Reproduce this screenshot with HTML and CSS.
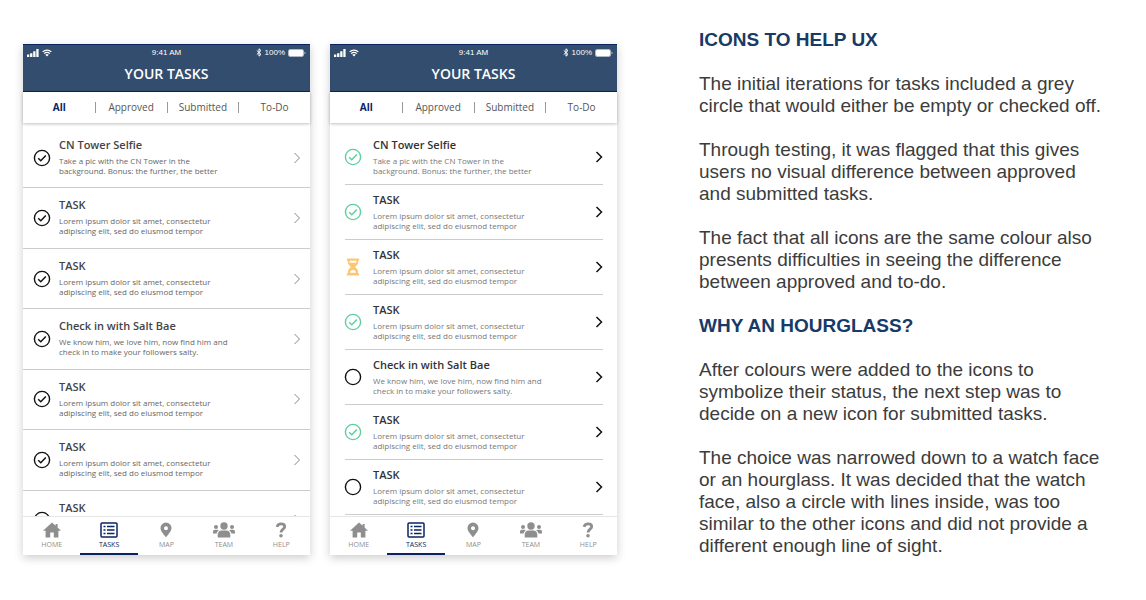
FILE: index.html
```
<!DOCTYPE html>
<html lang="en">
<head>
<meta charset="utf-8">
<meta name="viewport" content="width=device-width, initial-scale=1">
<title>Icons to help UX</title>
<link rel="stylesheet" href="styles.css">
</head>
<body>
<svg class="sprite" aria-hidden="true">
  <symbol id="signal" viewBox="0 0 12 8"><path d="M0 5.6h2.300V8H0zM3.100 4.200h2.300V8h-2.300zM6.200 2.300h2.300V8h-2.300zM9.300 0h2.300v8H9.300z"/></symbol>
  <symbol id="wifi" viewBox="0 0 12 9"><path d="M.8 3.2a7.4 7.4 0 0 1 10.4 0M2.6 5.2a4.8 4.8 0 0 1 6.8 0" fill="none" stroke="currentColor" stroke-width="1.5"/><path d="M6 8.8 3.9 6.7a3 3 0 0 1 4.2 0z"/></symbol>
  <symbol id="bluetooth" viewBox="0 0 6 9"><path d="M.8 2.5 5 6.4 3 8.2V.8l2 1.8L.8 6.5" fill="none" stroke="currentColor"/></symbol>
  <symbol id="battery" viewBox="0 0 18 8"><rect x=".5" y=".5" width="15" height="7" rx="1.5" fill="none" stroke="currentColor" opacity=".6"/><rect x="1" y="1" width="14" height="6" rx="1"/><path d="M16.5 2.7c1.4.5 1.4 2.1 0 2.6z" opacity=".7"/></symbol>
  <symbol id="done" viewBox="0 0 18 18"><circle cx="9" cy="9" r="7.6" fill="none" stroke="currentColor" stroke-width="1.4"/><path d="m5.2 9.200 2.600 2.500 5-5.200" fill="none" stroke="currentColor" stroke-width="1.5"/></symbol>
  <symbol id="todo" viewBox="0 0 18 18"><circle cx="9" cy="9" r="7.6" fill="none" stroke="currentColor" stroke-width="1.4"/></symbol>
  <symbol id="hourglass" viewBox="0 0 18 18"><path fill-rule="evenodd" d="M3.2.5h11.6q.3 0 .3.3v1.6q0 .3-.3.3H14v2.1c0 1.7-1.5 3-3 4.2 1.500 1.200 3 2.500 3 4.200v2.100h.8q.3 0 .3.300v1.600q0 .300-.3.300H3.200q-.3 0-.3-.300v-1.600q0-.300.300-.300H4v-2.100c0-1.700 1.500-3 3-4.200C5.500 7.800 4 6.500 4 4.800V2.700h-.8q-.3 0-.3-.3V.8q0-.3.3-.3zM5.700 2.800h6.600v2H5.700zM5.900 14.800C6.200 13 7.600 12 9 12s2.800 1 3.100 2.800z"/></symbol>
  <symbol id="chevron" viewBox="0 0 8 12"><path d="m1.500 1 5 5-5 5" fill="none" stroke="currentColor"/></symbol>
  <symbol id="chevron-bold" viewBox="0 0 8 12"><path d="m1.500 1 5 5-5 5" fill="none" stroke="currentColor" stroke-width="1.500"/></symbol>
  <symbol id="home" viewBox="0 0 18 16"><path d="M9 .5 12.600 3.800V2h2v3.600L18 8.800H15.400V15.500H10.800V10.500H7.200v5H2.600V8.800H0z"/></symbol>
  <symbol id="list" viewBox="0 0 18 16"><rect x="1" y="1" width="16" height="14" rx="1" fill="none" stroke="currentColor" stroke-width="1.500"/><path d="M3.500 4.500h2M3.500 8h2M3.500 11.500h2M7 4.500h7.500M7 8h7.500M7 11.500h7.500" fill="none" stroke="currentColor" stroke-width="1.400"/></symbol>
  <symbol id="pin" viewBox="0 0 12 16"><path fill-rule="evenodd" d="M6 .5a5.500 5.500 0 0 1 5.500 5.600C11.500 9.500 8 12.500 6 15.500 4 12.500.500 9.500.500 6.100A5.500 5.500 0 0 1 6 .5zm0 3.700a2 2 0 1 0 0 4 2 2 0 0 0 0-4z"/></symbol>
  <symbol id="team" viewBox="0 0 22 16"><circle cx="11" cy="4" r="3.700"/><circle cx="3" cy="5" r="2"/><circle cx="19" cy="5" r="2"/><path d="M4.700 15.500v-2.700C4.700 10 6.200 8.400 8.500 8.400h5c2.300 0 3.800 1.600 3.800 4.400v2.700zM0 11.500V10c0-1.300.8-2.200 2-2.200h2.300q.9 0 1.400.700-1.800 1-2.100 3zM22 11.500V10c0-1.300-.8-2.200-2-2.200h-2.300q-.9 0-1.400.700 1.800 1 2.100 3z"/></symbol>
  <symbol id="help" viewBox="0 0 12 16"><path d="M2 4.800C2.600 2.900 4 1.900 6 1.900c2.200 0 3.700 1 3.700 2.800C9.700 7.300 6 7.200 6 10.600" fill="none" stroke="currentColor" stroke-width="2.800"/><circle cx="6" cy="13.800" r="1.800"/></symbol>
</svg>

<main class="page">
  <section class="phone phone-before" aria-label="Original task list">
    <header class="app-header">
      <div class="status-bar">
        <span class="status-left"><svg class="i-signal"><use href="#signal"/></svg><svg class="i-wifi"><use href="#wifi"/></svg></span>
        <span>9:41 AM</span>
        <span class="status-right"><svg class="i-bluetooth"><use href="#bluetooth"/></svg>100%<svg class="i-battery"><use href="#battery"/></svg></span>
      </div>
      <h2 class="app-title">YOUR TASKS</h2>
    </header>
    <div class="tabs">
      <button class="tab tab-active" type="button">All</button>
      <button class="tab" type="button">Approved</button>
      <button class="tab" type="button">Submitted</button>
      <button class="tab" type="button">To-Do</button>
    </div>
    <div class="viewport">
      <ul class="tasks">
        <li><a class="task" href="#"><svg class="state"><use href="#done"/></svg><span class="copy"><strong>CN Tower Selfie</strong><span>Take a pic with the CN Tower in the<br>background. Bonus: the further, the better</span></span><svg class="chevron"><use href="#chevron"/></svg></a></li>
        <li><a class="task" href="#"><svg class="state"><use href="#done"/></svg><span class="copy"><strong>TASK</strong><span>Lorem ipsum dolor sit amet, consectetur<br>adipiscing elit, sed do eiusmod tempor</span></span><svg class="chevron"><use href="#chevron"/></svg></a></li>
        <li><a class="task" href="#"><svg class="state"><use href="#done"/></svg><span class="copy"><strong>TASK</strong><span>Lorem ipsum dolor sit amet, consectetur<br>adipiscing elit, sed do eiusmod tempor</span></span><svg class="chevron"><use href="#chevron"/></svg></a></li>
        <li><a class="task" href="#"><svg class="state"><use href="#done"/></svg><span class="copy"><strong>Check in with Salt Bae</strong><span>We know him, we love him, now find him and<br>check in to make your followers salty.</span></span><svg class="chevron"><use href="#chevron"/></svg></a></li>
        <li><a class="task" href="#"><svg class="state"><use href="#done"/></svg><span class="copy"><strong>TASK</strong><span>Lorem ipsum dolor sit amet, consectetur<br>adipiscing elit, sed do eiusmod tempor</span></span><svg class="chevron"><use href="#chevron"/></svg></a></li>
        <li><a class="task" href="#"><svg class="state"><use href="#done"/></svg><span class="copy"><strong>TASK</strong><span>Lorem ipsum dolor sit amet, consectetur<br>adipiscing elit, sed do eiusmod tempor</span></span><svg class="chevron"><use href="#chevron"/></svg></a></li>
        <li><a class="task" href="#"><svg class="state"><use href="#done"/></svg><span class="copy"><strong>TASK</strong></span><svg class="chevron"><use href="#chevron"/></svg></a></li>
      </ul>
    </div>
    <nav class="nav" aria-label="Original app">
      <a class="nav-item" href="#"><svg><use href="#home"/></svg>HOME</a>
      <a class="nav-item nav-active" href="#"><svg><use href="#list"/></svg>TASKS</a>
      <a class="nav-item" href="#"><svg><use href="#pin"/></svg>MAP</a>
      <a class="nav-item" href="#"><svg><use href="#team"/></svg>TEAM</a>
      <a class="nav-item" href="#"><svg><use href="#help"/></svg>HELP</a>
    </nav>
  </section>

  <section class="phone phone-after" aria-label="Revised task list">
    <header class="app-header">
      <div class="status-bar">
        <span class="status-left"><svg class="i-signal"><use href="#signal"/></svg><svg class="i-wifi"><use href="#wifi"/></svg></span>
        <span>9:41 AM</span>
        <span class="status-right"><svg class="i-bluetooth"><use href="#bluetooth"/></svg>100%<svg class="i-battery"><use href="#battery"/></svg></span>
      </div>
      <h2 class="app-title">YOUR TASKS</h2>
    </header>
    <div class="tabs">
      <button class="tab tab-active" type="button">All</button>
      <button class="tab" type="button">Approved</button>
      <button class="tab" type="button">Submitted</button>
      <button class="tab" type="button">To-Do</button>
    </div>
    <div class="viewport">
      <ul class="tasks">
        <li><a class="task" href="#"><svg class="state approved"><use href="#done"/></svg><span class="copy"><strong>CN Tower Selfie</strong><span>Take a pic with the CN Tower in the<br>background. Bonus: the further, the better</span></span><svg class="chevron"><use href="#chevron-bold"/></svg></a></li>
        <li><a class="task" href="#"><svg class="state approved"><use href="#done"/></svg><span class="copy"><strong>TASK</strong><span>Lorem ipsum dolor sit amet, consectetur<br>adipiscing elit, sed do eiusmod tempor</span></span><svg class="chevron"><use href="#chevron-bold"/></svg></a></li>
        <li><a class="task" href="#"><svg class="state submitted"><use href="#hourglass"/></svg><span class="copy"><strong>TASK</strong><span>Lorem ipsum dolor sit amet, consectetur<br>adipiscing elit, sed do eiusmod tempor</span></span><svg class="chevron"><use href="#chevron-bold"/></svg></a></li>
        <li><a class="task" href="#"><svg class="state approved"><use href="#done"/></svg><span class="copy"><strong>TASK</strong><span>Lorem ipsum dolor sit amet, consectetur<br>adipiscing elit, sed do eiusmod tempor</span></span><svg class="chevron"><use href="#chevron-bold"/></svg></a></li>
        <li><a class="task" href="#"><svg class="state"><use href="#todo"/></svg><span class="copy"><strong>Check in with Salt Bae</strong><span>We know him, we love him, now find him and<br>check in to make your followers salty.</span></span><svg class="chevron"><use href="#chevron-bold"/></svg></a></li>
        <li><a class="task" href="#"><svg class="state approved"><use href="#done"/></svg><span class="copy"><strong>TASK</strong><span>Lorem ipsum dolor sit amet, consectetur<br>adipiscing elit, sed do eiusmod tempor</span></span><svg class="chevron"><use href="#chevron-bold"/></svg></a></li>
        <li><a class="task" href="#"><svg class="state"><use href="#todo"/></svg><span class="copy"><strong>TASK</strong><span>Lorem ipsum dolor sit amet, consectetur<br>adipiscing elit, sed do eiusmod tempor</span></span><svg class="chevron"><use href="#chevron-bold"/></svg></a></li>
      </ul>
    </div>
    <nav class="nav" aria-label="Revised app">
      <a class="nav-item" href="#"><svg><use href="#home"/></svg>HOME</a>
      <a class="nav-item nav-active" href="#"><svg><use href="#list"/></svg>TASKS</a>
      <a class="nav-item" href="#"><svg><use href="#pin"/></svg>MAP</a>
      <a class="nav-item" href="#"><svg><use href="#team"/></svg>TEAM</a>
      <a class="nav-item" href="#"><svg><use href="#help"/></svg>HELP</a>
    </nav>
  </section>

  <article class="article">
    <h2>ICONS TO HELP UX</h2>
    <p>The initial iterations for tasks included a grey circle that would either be empty or checked off.</p>
    <p>Through testing, it was flagged that this gives users no visual difference between approved and submitted tasks.</p>
    <p>The fact that all icons are the same colour also presents difficulties in seeing the difference between approved and to-do.</p>
    <h2>WHY AN HOURGLASS?</h2>
    <p>After colours were added to the icons to symbolize their status, the next step was to decide on a new icon for submitted tasks.</p>
    <p>The choice was narrowed down to a watch face or an hourglass. It was decided that the watch face, also a circle with lines inside, was too similar to the other icons and did not provide a different enough line of sight.</p>
  </article>
</main>
</body>
</html>
```

FILE: styles.css
```
* { box-sizing: border-box; }

body {
  margin: 0;
  background: #fff;
  font-family: "Open Sans", "Noto Sans", sans-serif;
}

svg { display: block; fill: currentColor; }
.sprite { display: none; }

.page {
  display: grid;
  grid-template-columns: 287fr 287fr 469fr;
  column-gap: 20px;
  align-items: start;
  min-height: 100vh;
  padding: 0 40px 0 23px;
}

.phone {
  display: flex;
  flex-direction: column;
  height: calc(100vh - 89px);
  margin-top: 44px;
  background: #fff;
  box-shadow: 0 3px 9px rgba(0, 0, 0, 0.2);
}

/* Header */
.app-header {
  height: 48px;
  border-top: 1px solid #0a2463;
  border-bottom: 1px solid #0a2463;
  background: #334d6e;
  color: #fff;
}

.status-bar {
  display: grid;
  grid-template-columns: 1fr auto 1fr;
  align-items: center;
  height: 15px;
  padding: 0 4px;
  font: 8px/12px "Liberation Sans", Arial, sans-serif;
}
.status-left, .status-right { display: flex; align-items: center; gap: 3px; }
.status-right { justify-content: flex-end; }
.i-signal { width: 12px; height: 8px; }
.i-wifi { width: 10px; height: 8px; }
.i-bluetooth { width: 6px; height: 9px; }
.i-battery { width: 18px; height: 8px; }

.app-title {
  margin: 4px 0 0;
  font-size: 14px;
  font-weight: 600;
  line-height: 20px;
  text-align: center;
}

/* Filter tabs */
.tabs {
  z-index: 1;
  display: grid;
  grid-template-columns: repeat(4, 1fr);
  align-items: center;
  height: 31px;
  background: #fff;
  box-shadow: 0 1px 3px rgba(0, 0, 0, 0.25);
}
.tab {
  padding: 0;
  border: 0;
  border-left: 1px solid #999;
  background: none;
  color: #555;
  font: 10px/11px "Open Sans", "Noto Sans", sans-serif;
}
.tab-active { border-color: transparent; color: #0a2463; font-weight: 700; }

/* Task list */
.viewport { flex: 1; min-height: 0; overflow: hidden; }
.tasks {
  display: grid;
  grid-auto-rows: 1fr;
  margin: 0;
  padding: 0;
  list-style: none;
}
.tasks li { border-bottom: 1px solid #ccc; }
.task {
  display: grid;
  align-items: center;
  height: 100%;
  color: #111;
  text-decoration: none;
}
.state { width: 18px; height: 18px; }
.chevron { width: 8px; height: 12px; }
.copy { align-self: start; color: #666; font-size: 8px; line-height: 10px; white-space: nowrap; }
.copy strong {
  display: block;
  margin-bottom: 4px;
  color: #444;
  font-size: 11px;
  font-weight: 600;
  line-height: 14px;
}

.phone-before .tasks { height: 428px; padding-top: 5px; }
.phone-before .task { grid-template-columns: 26px 1fr 8px; padding: 0 9px 0 10px; }
.phone-before .copy { padding-top: 10px; }
.phone-before .chevron { color: #888; }

.phone-after .tasks { grid-auto-rows: 55px; padding: 7px 14px 0 15px; }
.phone-after .task { grid-template-columns: 28px 1fr 8px; }
.phone-after .state { margin-left: -1px; }
.phone-after .copy { padding-top: 8px; color: #777; }
.phone-after .copy strong { color: #333; }
.approved { color: #5fcf9f; }
.submitted { color: #fdc673; }

/* Bottom navigation */
.nav {
  display: grid;
  grid-template-columns: repeat(5, 1fr);
  height: 39px;
  border-top: 1px solid #e6e6e6;
  background: #fff;
}
.nav-item {
  display: flex;
  flex-direction: column;
  align-items: center;
  gap: 2px;
  padding-top: 5px;
  border-bottom: 2px solid transparent;
  color: #8e8e8e;
  font-size: 7px;
  line-height: 10px;
  text-decoration: none;
}
.nav-item svg { width: 22px; height: 16px; }
.nav-active { border-color: #0a2463; color: #0a2463; }

/* Commentary */
.article {
  padding: 29px 0 0 62px;
  color: #3c3c3c;
  font: 19px/22px "Liberation Sans", Arial, sans-serif;
}
.article h2 {
  margin: 0 0 22px;
  color: #173a66;
  font-size: 19px;
  line-height: 22px;
}
.article p { margin: 0 0 22px; }
```
